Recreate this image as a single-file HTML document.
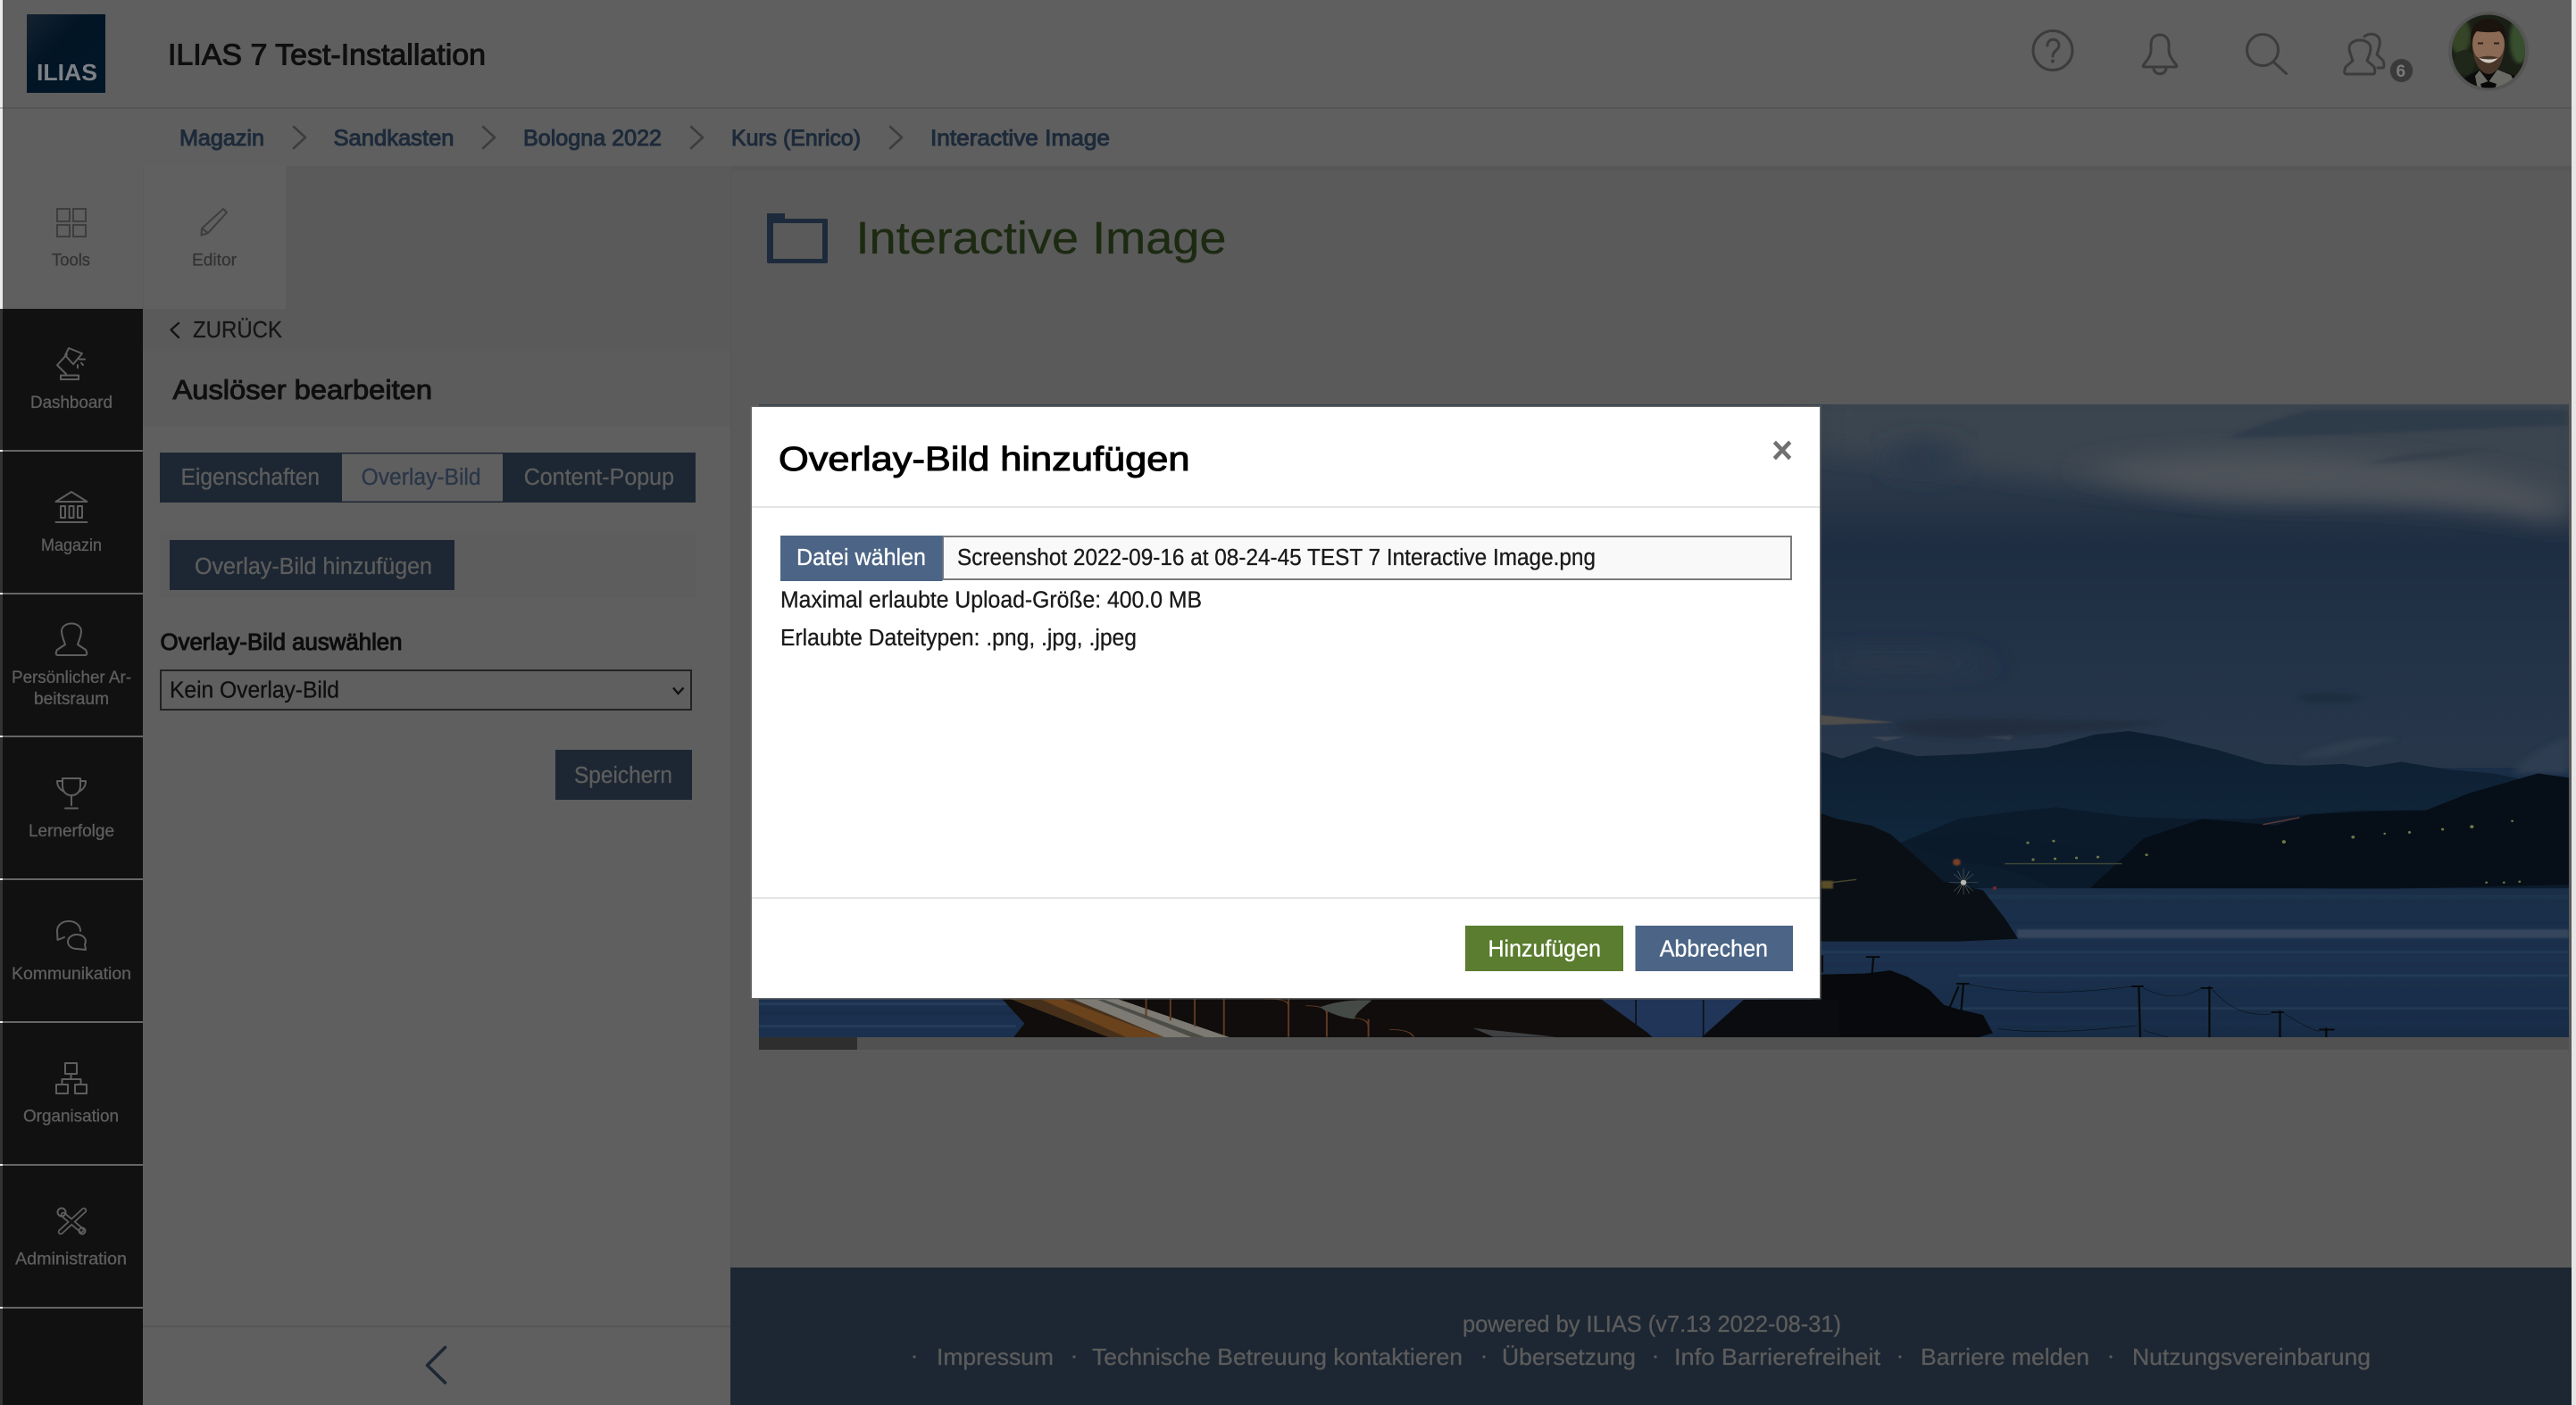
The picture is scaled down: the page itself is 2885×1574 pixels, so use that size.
<!DOCTYPE html>
<html lang="de"><head><meta charset="utf-8"><title>Interactive Image</title>
<style>
html,body{margin:0;padding:0;background:#5a5a5a;width:2885px;height:1574px;overflow:hidden}
svg{display:block}
text{font-family:"Liberation Sans",Arial,sans-serif;white-space:pre;fill:currentColor;stroke:currentColor;stroke-width:.3px}
text.s{stroke-width:1px}
text.p{stroke-width:0}
.i{fill:none;stroke:#3c3c3c;stroke-width:3;stroke-linecap:round;stroke-linejoin:round}
.n{fill:none;stroke:#5e5e5e;stroke-width:2;stroke-linejoin:round;stroke-linecap:round}
.tl{fill:none;stroke:#3e3e3e;stroke-width:2}
</style></head><body>
<svg xmlns="http://www.w3.org/2000/svg" width="2885" height="1574" viewBox="0 0 2885 1574">
<defs>
<linearGradient id="lg" x1="0" y1="0" x2="1" y2="1"><stop offset="0" stop-color="#16222f"/><stop offset=".4" stop-color="#011525"/><stop offset="1" stop-color="#011627"/></linearGradient>
<linearGradient id="sky" x1="0" y1="0" x2="0" y2="1"><stop offset="0" stop-color="#36404c"/><stop offset=".2" stop-color="#2c3949"/><stop offset=".38" stop-color="#1e2d42"/><stop offset=".65" stop-color="#223247"/><stop offset="1" stop-color="#29374b"/></linearGradient>
<linearGradient id="sea" x1="0" y1="0" x2="0" y2="1"><stop offset="0" stop-color="#1a2e47"/><stop offset=".5" stop-color="#1b314d"/><stop offset="1" stop-color="#172b45"/></linearGradient>
<linearGradient id="far" x1="0" y1="0" x2="0" y2="1"><stop offset="0" stop-color="#0e1e30"/><stop offset="1" stop-color="#112a40"/></linearGradient>
<filter id="b12" x="-30%" y="-100%" width="160%" height="300%"><feGaussianBlur stdDeviation="40 26"/></filter>
<filter id="b4" x="-20%" y="-60%" width="140%" height="220%"><feGaussianBlur stdDeviation="9 5"/></filter>
<filter id="b1" x="-5%" y="-100%" width="110%" height="300%"><feGaussianBlur stdDeviation="2 1.5"/></filter>
<clipPath id="imgclip"><rect x="850" y="453" width="2027" height="709"/></clipPath>
<clipPath id="av"><ellipse cx="2787" cy="57.5" rx="41" ry="41"/></clipPath>
</defs>

<!-- base -->
<rect width="2885" height="1574" fill="#5a5a5a"/>
<rect x="2880" y="0" width="5" height="1574" fill="#e6e6e6"/>

<!-- header -->
<rect x="3" y="0" width="2877" height="186" fill="#5f5f5f"/>
<rect x="0" y="0" width="3" height="346" fill="#ececec"/>
<rect x="3" y="120" width="2877" height="2" fill="#565656"/>
<rect x="0" y="120" width="3" height="2" fill="#bbb"/>
<rect x="3" y="186" width="2877" height="5" fill="#575757"/>
<rect x="30" y="16" width="88" height="88" fill="url(#lg)"/>
<text class="p" x="41" y="90" font-size="26" font-weight="700" color="#7d8186" textLength="68" lengthAdjust="spacingAndGlyphs">ILIAS</text>
<text class="s" x="188" y="72.5" font-size="33" color="#0f0f0f" textLength="356" lengthAdjust="spacingAndGlyphs">ILIAS 7 Test-Installation</text>

<g color="#1d2a3a" font-size="25">
<text class="s" x="201" y="163" textLength="95" lengthAdjust="spacingAndGlyphs">Magazin</text>
<text class="s" x="373.5" y="163" textLength="135" lengthAdjust="spacingAndGlyphs">Sandkasten</text>
<text class="s" x="586" y="163" textLength="155" lengthAdjust="spacingAndGlyphs">Bologna 2022</text>
<text class="s" x="819" y="163" textLength="145" lengthAdjust="spacingAndGlyphs">Kurs (Enrico)</text>
<text class="s" x="1042" y="163" textLength="201" lengthAdjust="spacingAndGlyphs">Interactive Image</text>
</g>
<g fill="none" stroke="#3d3d3d" stroke-width="2.6" stroke-linecap="round" stroke-linejoin="round">
<path d="M329 142L342 154L329 166"/><path d="M541 142L554 154L541 166"/><path d="M774 142L787 154L774 166"/><path d="M997 142L1010 154L997 166"/>
</g>

<!-- header icons -->
<ellipse class="i" cx="2299" cy="56.5" rx="22" ry="22"/>
<path class="i" d="M2293 51C2293 42 2306 42 2306 51C2306 56 2299 57 2299 63"/><circle cx="2299" cy="68.5" r="2" fill="#3c3c3c"/>
<path class="i" d="M2400.5 73C2404 68 2409 63 2409 56L2409 50C2409 43 2413 39 2419 39C2425 39 2429 43 2429 50L2429 56C2429 63 2434 68 2437.5 73Q2438.5 75 2436 75L2402 75Q2399.5 75 2400.5 73Z"/>
<path class="i" d="M2412 76C2412 85 2426 85 2426 76"/>
<circle class="i" cx="2534" cy="56" r="17.5"/><path class="i" d="M2546 69L2560.5 82.5"/>
<path class="i" d="M2635 68C2633 62 2631 58 2631 54C2631 48 2637 45 2643 45C2649 45 2655 48 2655 54C2655 59 2653 63 2651 68L2659 75Q2661 83 2658 83L2628 83Q2624 83 2627 75Z"/>
<path class="i" d="M2648 41C2652 37 2660 37 2664 42C2667 47 2664 55 2662 61L2669 68Q2671 74 2669 76L2663 76"/>
<ellipse cx="2689.5" cy="79" rx="12.7" ry="13" fill="#3a3a3a"/>
<text class="p" x="2683.5" y="86" font-size="19" font-weight="700" color="#7a7a7a">6</text>
<ellipse cx="2787" cy="57.5" rx="45" ry="44.5" fill="#555"/>
<g clip-path="url(#av)">
<rect x="2742" y="13" width="90" height="90" fill="#1a1f16"/>
<ellipse cx="2755" cy="40" rx="12" ry="20" fill="#344428" filter="url(#b1)"/>
<ellipse cx="2822" cy="45" rx="11" ry="26" fill="#38502f" filter="url(#b1)"/>
<ellipse cx="2760" cy="70" rx="12" ry="14" fill="#1f271b"/>
<path d="M2745 100L2762 86L2777 78L2797 78L2815 84L2832 100Z" fill="#0c0c0c"/>
<path d="M2777 79L2787 92L2797 78L2812 84L2818 95L2800 101L2775 101L2772 85Z" fill="#6a6a64"/>
<path d="M2778 94L2787 91L2796 94L2794 100L2780 100Z" fill="#060606"/>
<ellipse cx="2787" cy="50" rx="18" ry="27" fill="#8a6a54"/>
<path d="M2769 50C2769 66 2776 82 2787 83C2798 83 2805 66 2805 50C2804 58 2802 63 2798 65C2794 62 2780 62 2776 65C2772 63 2770 58 2769 50Z" fill="#4a3629"/>
<path d="M2768 48C2764 30 2776 21 2787 21C2800 21 2809 30 2806 48C2804 41 2802 37 2799 35C2790 37 2780 36 2774 35C2771 38 2770 41 2768 48Z" fill="#1b130e"/>
<path d="M2776 65Q2787 76 2798 65Q2787 68 2776 65Z" fill="#cfcac2"/>
<rect x="2775" y="47.5" width="6" height="2" fill="#2c1f16"/><rect x="2793" y="47.5" width="6" height="2" fill="#2c1f16"/>
</g>

<!-- tool column -->
<rect x="3" y="186" width="157" height="160" fill="#5f5f5f"/>
<rect x="160" y="186" width="160" height="160" fill="#606060"/>
<rect x="160" y="186" width="1" height="160" fill="#5a5a5a"/>
<g class="tl">
<rect class="tl" x="64" y="234" width="14" height="14"/><rect class="tl" x="82" y="234" width="14" height="14"/>
<rect class="tl" x="64" y="252" width="14" height="13"/><rect class="tl" x="82" y="252" width="14" height="13"/>
</g>
<path class="tl" stroke-linejoin="round" d="M225.5 263.5L226 256L250 234L254 238L233 261ZM226 256L233 261"/>
<text x="58" y="297.5" font-size="19" color="#333" textLength="43" lengthAdjust="spacingAndGlyphs">Tools</text>
<text x="215" y="297.5" font-size="19" color="#333" textLength="50" lengthAdjust="spacingAndGlyphs">Editor</text>

<!-- nav -->
<rect x="0" y="346" width="3" height="1228" fill="#333"/>
<rect x="3" y="346" width="157" height="1228" fill="#111"/>
<g fill="#666"><rect x="3" y="504" width="157" height="2"/><rect x="3" y="664" width="157" height="2"/><rect x="3" y="824" width="157" height="2"/><rect x="3" y="984" width="157" height="2"/><rect x="3" y="1144" width="157" height="2"/><rect x="3" y="1304" width="157" height="2"/><rect x="3" y="1464" width="157" height="2"/></g>
<g fill="#ececec"><rect x="0" y="504" width="3" height="2"/><rect x="0" y="664" width="3" height="2"/><rect x="0" y="824" width="3" height="2"/><rect x="0" y="984" width="3" height="2"/><rect x="0" y="1144" width="3" height="2"/><rect x="0" y="1304" width="3" height="2"/><rect x="0" y="1464" width="3" height="2"/></g>
<g font-size="19" color="#5e5e5e">
<text x="34" y="457" textLength="92" lengthAdjust="spacingAndGlyphs">Dashboard</text>
<text x="46" y="617" textLength="68" lengthAdjust="spacingAndGlyphs">Magazin</text>
<text x="13" y="765" textLength="134" lengthAdjust="spacingAndGlyphs">Persönlicher Ar-</text>
<text x="38" y="789" textLength="84" lengthAdjust="spacingAndGlyphs">beitsraum</text>
<text x="32" y="937" textLength="96" lengthAdjust="spacingAndGlyphs">Lernerfolge</text>
<text x="13" y="1097" textLength="134" lengthAdjust="spacingAndGlyphs">Kommunikation</text>
<text x="26" y="1256.5" textLength="107" lengthAdjust="spacingAndGlyphs">Organisation</text>
<text x="17" y="1416.5" textLength="125" lengthAdjust="spacingAndGlyphs">Administration</text>
</g>
<!-- nav icons -->
<path class="n" d="M68 420.5H88V425H68ZM75 397L64 409L74 419M82 408L73 398L77 390L92 396ZM89 402.5H95M87 409V412M91 406.5L93 409"/>
<path class="n" d="M62.5 562L80 551L97.5 562ZM68 567H73V580H68ZM77.5 567H82.5V580H77.5ZM87 567H92V580H87ZM62.5 585H97.5"/>
<path class="n" d="M73 722C71 716 69 712 69 707C69 702 74 698.5 80 698.5C86 698.5 91 702 91 707C91 712 89 716 87 722L96 728Q99 734 95 734L65 734Q61 734 64 728Z"/>
<path class="n" d="M70 872H90V880C90 888 85 891 80 891C75 891 70 888 70 880ZM70 875H64C64 882 68 885 72 887M90 875H96C96 882 92 885 88 887M80 891V902M73 905.5H87"/>
<path class="n" d="M90 1043C90 1036 84 1032 77 1032C70 1032 64 1036 64 1043L64.5 1053L72 1050M86 1047C80 1047 76 1051 76 1055C76 1060 81 1063 86 1063L96 1064L95 1058C98 1052 93 1047 86 1047Z"/>
<path class="n" d="M73 1191H86V1203H73ZM79.5 1203V1209M69.5 1215V1209H90.5V1215M63 1215H76V1225H63ZM84 1215H97V1225H84Z"/>
<g fill="none" stroke-linecap="round"><path d="M71 1361L91 1378M94 1356L68 1380" stroke="#5e5e5e" stroke-width="6.5"/><path d="M71 1361L91 1378M94 1356L68 1380" stroke="#111" stroke-width="3"/><circle cx="69" cy="1358" r="4.5" stroke="#5e5e5e" stroke-width="2"/><circle cx="92" cy="1379" r="3.5" stroke="#5e5e5e" stroke-width="2"/></g>

<!-- tool panel -->
<rect x="160" y="346" width="658" height="1228" fill="#5f5f5f"/>
<rect x="160" y="346" width="658" height="45" fill="#5a5a5a"/>
<rect x="160" y="391" width="658" height="5" fill="#5c5c5c"/>
<rect x="160" y="396" width="658" height="81" fill="#5c5c5c"/>
<rect x="320" y="186" width="498" height="160" fill="#5a5a5a"/>
<path d="M200 362L191.5 369.5L200 378" fill="none" stroke="#141414" stroke-width="2.4" stroke-linecap="round" stroke-linejoin="round"/>
<text x="216" y="378" font-size="25.5" color="#161616" textLength="100" lengthAdjust="spacingAndGlyphs">ZURÜCK</text>
<text class="s" x="193.5" y="447" font-size="31" color="#0f0f0f" textLength="290.5" lengthAdjust="spacingAndGlyphs">Auslöser bearbeiten</text>

<rect x="179" y="507" width="600" height="56" fill="#1d2733"/>
<rect x="383" y="508.5" width="180" height="53" fill="#5f5f5f"/>
<g font-size="25.5">
<text x="202.5" y="543" color="#5d5d5d" textLength="155.5" lengthAdjust="spacingAndGlyphs">Eigenschaften</text>
<text x="404.6" y="543" color="#2a3648" textLength="134" lengthAdjust="spacingAndGlyphs">Overlay-Bild</text>
<text x="586.7" y="543" color="#5d5d5d" textLength="168.3" lengthAdjust="spacingAndGlyphs">Content-Popup</text>
</g>
<rect x="179" y="597" width="600" height="73" fill="#5d5d5d"/>
<rect x="190" y="605" width="319" height="56" fill="#1d2733"/>
<text x="218" y="643" font-size="25.5" color="#5d5d5d" textLength="266" lengthAdjust="spacingAndGlyphs">Overlay-Bild hinzufügen</text>
<text class="s" x="179.5" y="728" font-size="25.5" color="#0c0c0c" textLength="271" lengthAdjust="spacingAndGlyphs">Overlay-Bild auswählen</text>
<rect x="180" y="751" width="594" height="44" fill="none" stroke="#222" stroke-width="2"/>
<text x="190" y="781.5" font-size="25.5" color="#0f0f0f" textLength="190" lengthAdjust="spacingAndGlyphs">Kein Overlay-Bild</text>
<path d="M754 770.5L759.5 777L765.5 770.5" fill="none" stroke="#111" stroke-width="2.4"/>
<rect x="622" y="840" width="153" height="56" fill="#1d2733"/>
<text x="643" y="877" font-size="25.5" color="#5d5d5d" textLength="110" lengthAdjust="spacingAndGlyphs">Speichern</text>

<rect x="160" y="1485" width="658" height="2" fill="#555"/>
<path d="M498.5 1509.5L478.5 1529.5L498.5 1549" fill="none" stroke="#1d2733" stroke-width="3.6" stroke-linecap="round" stroke-linejoin="round"/>
<rect x="818" y="186" width="2" height="1234" fill="#585858"/>

<!-- main title -->
<path d="M859 239H879V245H925Q927 245 927 247V293Q927 295 925 295H861Q859 295 859 293Z" fill="#1d2a3c"/>
<rect x="866" y="250" width="55" height="40" fill="#5a5a5a"/>
<text x="958.5" y="284" font-size="51" color="#1d2a12" textLength="415" lengthAdjust="spacingAndGlyphs">Interactive Image</text>

<!-- image -->
<rect x="850" y="1162" width="2027" height="14" fill="#515151"/>
<rect x="850" y="1162" width="110" height="14" fill="#2e2e2e"/>
<g clip-path="url(#imgclip)">
<rect x="850" y="453" width="2027" height="420" fill="url(#sky)"/>
<rect x="850" y="860" width="2027" height="302" fill="url(#sea)"/>
<g transform="translate(2030 440) scale(.5453 .4847)">
 <!-- clouds -->
 <path d="M0 0H1600V250C1400 220 1200 240 900 240C700 240 500 200 300 170C200 160 100 140 0 130Z" fill="#3a444f" filter="url(#b12)"/>
 <path d="M550 175C750 130 1000 130 1250 165C1380 180 1480 205 1553 240V310C1450 280 1300 255 1050 250C800 250 700 225 550 175Z" fill="#4d525a" filter="url(#b12)"/>
 <path d="M1020 40H1553V75C1400 80 1200 95 850 105C900 80 950 60 1020 40Z" fill="#2f3b49" filter="url(#b4)"/>
 <ellipse cx="230" cy="150" rx="70" ry="45" fill="#29384a" filter="url(#b12)"/>
 <path d="M1130 165C1250 130 1350 125 1400 130L1300 150Z" fill="#353f4c" filter="url(#b4)"/>
 <ellipse cx="1060" cy="705" rx="65" ry="13" fill="#1e2d41" filter="url(#b4)"/>
 <path d="M17 600H300L360 640L200 650L17 640Z" fill="#2b394b" filter="url(#b12)"/>
 <path d="M17 745L170 762L17 768Z" fill="#504d49" filter="url(#b1)"/>
 <path d="M120 795H190L150 805ZM345 795L415 788L405 802Z" fill="#3c4755" filter="url(#b1)"/>
 <path d="M180 760C300 740 500 760 720 760C600 790 400 790 330 800C200 800 150 780 180 760Z" fill="#202e41" filter="url(#b4)"/>
 <path d="M1000 840C1080 800 1150 790 1200 800C1100 830 1060 850 1000 840Z" fill="#2e3c4f" filter="url(#b4)"/>
 <path d="M1440 880C1470 830 1520 810 1553 795V880Z" fill="#2d3c51" filter="url(#b4)"/>
 <!-- mountains -->
 <path d="M17 830L60 845L130 818L215 840L330 835L480 820L580 790L650 782L720 795L830 825L930 858L1010 862L1090 858L1140 865L1210 853L1300 870L1400 880L1450 892L1553 900V1150H17Z" fill="url(#far)"/>
 <path d="M180 1040L300 985L400 970L500 958L650 980L780 985L900 985L1000 975L1120 965L1260 965L1350 925L1490 880L1553 890V1145H180Z" fill="#0b1b2c"/>
 <path d="M190 1040C260 1015 340 1010 420 1030L600 1060V1145H380L300 1090Z" fill="#0a1a2a"/>
 <path d="M570 1145L680 1030L800 985L950 1000L1020 975L1130 968L1260 965L1350 925L1490 880L1553 890V1137L1200 1146Z" fill="#060e18"/>
 <path d="M280 1090C340 1080 420 1100 490 1145H340Z" fill="#0c1d2e"/>
 <rect x="395" y="1087" width="240" height="3" fill="#3d4636"/>
 <path d="M925 998L1000 982" stroke="#5a3a36" stroke-width="3"/>
 <rect x="360" y="1152" width="170" height="5" fill="#25344a"/>
 <!-- sea -->
 <rect x="17" y="1146" width="1536" height="344" fill="url(#sea)"/>
 <rect x="360" y="1160" width="1193" height="10" fill="#1f354e" filter="url(#b1)"/>
 <rect x="400" y="1222" width="1153" height="8" fill="#192d48" filter="url(#b1)"/>
 <rect x="420" y="1240" width="1133" height="20" fill="#34445c" filter="url(#b1)"/>
 <rect x="17" y="1270" width="1536" height="8" fill="#1a2f4b" filter="url(#b1)"/>
 <rect x="17" y="1290" width="1536" height="5" fill="#233b57" filter="url(#b1)"/>
 <rect x="17" y="1315" width="1536" height="10" fill="#1a2f4c" filter="url(#b1)"/>
 <rect x="300" y="1345" width="1253" height="5" fill="#243c58" filter="url(#b1)"/>
 <rect x="300" y="1380" width="1253" height="8" fill="#192e4c" filter="url(#b1)"/>
 <rect x="300" y="1420" width="1253" height="5" fill="#233b57" filter="url(#b1)"/>
 <rect x="300" y="1455" width="1253" height="6" fill="#192e4c" filter="url(#b1)"/>
 <!-- headland -->
 <path d="M0 965L50 985L120 1000L160 1020L215 1075L270 1130L350 1150L395 1215L422 1262L300 1268L0 1268Z" fill="#0a0f15"/>
 <path d="M17 1135L90 1125" stroke="#4a4530" stroke-width="3"/>
 <rect x="18" y="1128" width="24" height="18" fill="#5a4e28" filter="url(#b1)"/>
 <!-- foreground -->
 <path d="M0 1345L110 1342L160 1335L195 1350L240 1380L270 1415L300 1425L350 1438L370 1480L340 1490H0Z" fill="#07090c"/>
 <g stroke="#07090c" fill="none">
  <path d="M670 1370L673 1490M655 1372H680M815 1372V1490M797 1376H822M960 1428V1490M942 1432H968M1055 1468V1490M1040 1472H1072" stroke-width="4"/>
  <path d="M310 1365L305 1430M295 1366H322M300 1372L280 1425M125 1305L122 1345L110 1345M110 1304H138M20 1300V1340" stroke-width="4"/>
  <path d="M322 1368C400 1385 500 1395 655 1372M680 1376C720 1400 760 1400 797 1378M822 1380C860 1430 900 1440 942 1436M968 1434C990 1450 1020 1470 1040 1476M380 1470C480 1485 600 1470 665 1463M680 1474L730 1490" stroke-width="1"/>
 </g>
 <!-- lights -->
 <circle cx="296" cy="1085" r="8" fill="#7a4028" filter="url(#b1)"/>
 <circle cx="374" cy="1145" r="4" fill="#7a2626"/>
 <g stroke="#6e6e68" stroke-width="1"><path d="M280 1132H340M310 1100V1160M290 1112L330 1152M330 1112L290 1152M298 1105L322 1158M322 1105L298 1158"/></g>
 <circle cx="310" cy="1132" r="6" fill="#b8b8b0"/>
 <g fill="#6f7748"><circle cx="442" cy="1040" r="3"/><circle cx="495" cy="1036" r="3"/><circle cx="453" cy="1079" r="3"/><circle cx="498" cy="1077" r="3"/><circle cx="542" cy="1075" r="3"/><circle cx="586" cy="1073" r="3"/><circle cx="686" cy="1068" r="3"/><circle cx="968" cy="1038" r="4"/><circle cx="1110" cy="1027" r="3.5"/><circle cx="1175" cy="1019" r="2.5"/><circle cx="1226" cy="1016" r="3"/><circle cx="1294" cy="1009" r="3"/><circle cx="1354" cy="1003" r="4"/><circle cx="1437" cy="990" r="2.5"/><circle cx="1384" cy="1132" r="2.5"/><circle cx="1420" cy="1132" r="2.5"/><circle cx="1452" cy="1130" r="2.5"/></g>
</g>
<!-- below modal strip -->
<g transform="translate(840 960) scale(.7782 .3333)">
 <rect x="13" y="470" width="1290" height="140" fill="#1b304e"/>
 <rect x="13" y="490" width="370" height="8" fill="#253c5a"/><rect x="13" y="520" width="370" height="10" fill="#182c48"/><rect x="13" y="565" width="370" height="8" fill="#253c5a"/>
 <path d="M360 470H1240L1300 610H378L395 560Z" fill="#100d0c"/>
 <path d="M372 475L460 475L680 610L520 610Z" fill="#46301a"/>
 <path d="M420 480L450 478L600 610L545 610Z" fill="#6a421c"/>
 <path d="M465 478L530 478L695 610L600 610Z" fill="#7c7a72"/>
 <path d="M500 480L510 480L660 610L640 610Z" fill="#4d4d48"/>
 <g stroke="#5f3a22" stroke-width="2.5" fill="none"><path d="M570 475V540M605 475V550M640 475V570M682 475V600M775 478V605M830 510V605M890 545V605"/><path d="M740 478Q775 475 775 500M800 500Q830 500 830 525M860 540Q890 540 890 570M920 580Q950 580 955 605"/></g>
 <path d="M820 505C850 480 880 480 895 482C880 510 870 530 870 545C850 540 830 520 820 505Z" fill="#464a46"/>
 <path d="M1040 575L1160 605H1070Z" fill="#3e4042"/>
 <path d="M1220 470H1470L1375 605H1300Z" fill="#213558"/>
 <path d="M1275 480V605M1372 480V605" stroke="#0c0e12" stroke-width="2"/>
 <path d="M1370 605L1430 480H1568V610H1370Z" fill="#0a0c10"/>
</g>
</g>

<!-- footer -->
<rect x="818" y="1420" width="2062" height="154" fill="#1d2733"/>
<g font-size="26" color="#5c5c5c">
<text x="1638" y="1492" textLength="424" lengthAdjust="spacingAndGlyphs">powered by ILIAS (v7.13 2022-08-31)</text>
<text x="1049" y="1529" textLength="131" lengthAdjust="spacingAndGlyphs">Impressum</text>
<text x="1223" y="1529" textLength="415" lengthAdjust="spacingAndGlyphs">Technische Betreuung kontaktieren</text>
<text x="1682" y="1529" textLength="150" lengthAdjust="spacingAndGlyphs">Übersetzung</text>
<text x="1875" y="1529" textLength="231" lengthAdjust="spacingAndGlyphs">Info Barrierefreiheit</text>
<text x="2151" y="1529" textLength="189" lengthAdjust="spacingAndGlyphs">Barriere melden</text>
<text x="2388" y="1529" textLength="267" lengthAdjust="spacingAndGlyphs">Nutzungsvereinbarung</text>
</g>
<g fill="#5c5c5c"><circle cx="1024" cy="1520" r="1.6"/><circle cx="1203" cy="1520" r="1.6"/><circle cx="1662" cy="1520" r="1.6"/><circle cx="1854" cy="1520" r="1.6"/><circle cx="2128" cy="1520" r="1.6"/><circle cx="2364" cy="1520" r="1.6"/></g>

<!-- modal -->
<rect x="840.5" y="454.5" width="1199" height="665" fill="#666"/>
<rect x="842" y="456" width="1196" height="662" fill="#fff"/>
<rect x="842" y="567" width="1196" height="2" fill="#e5e5e5"/>
<rect x="842" y="1005" width="1196" height="2" fill="#e5e5e5"/>
<text class="s" x="872" y="527" font-size="38" color="#000" textLength="460.5" lengthAdjust="spacingAndGlyphs">Overlay-Bild hinzufügen</text>
<text class="p" x="1984" y="519" font-size="44" font-weight="700" color="#707070" textLength="24" lengthAdjust="spacingAndGlyphs">×</text>
<rect x="1056" y="601" width="950" height="48" fill="#f9f9f9" stroke="#7b7b7b" stroke-width="2"/>
<rect x="874" y="600" width="181.5" height="51" fill="#4c6586"/>
<text x="892" y="633" font-size="25.5" color="#fff" textLength="145" lengthAdjust="spacingAndGlyphs">Datei wählen</text>
<text x="1072" y="633" font-size="25.5" color="#1a1a1a" textLength="715" lengthAdjust="spacingAndGlyphs">Screenshot 2022-09-16 at 08-24-45 TEST 7 Interactive Image.png</text>
<text x="874" y="680.5" font-size="25.5" color="#1a1a1a" textLength="472" lengthAdjust="spacingAndGlyphs">Maximal erlaubte Upload-Größe: 400.0 MB</text>
<text x="874" y="723" font-size="25.5" color="#1a1a1a" textLength="399" lengthAdjust="spacingAndGlyphs">Erlaubte Dateitypen: .png, .jpg, .jpeg</text>
<rect x="1641" y="1037" width="177" height="51" fill="#5a7d2f"/>
<text x="1666.5" y="1071.5" font-size="25.5" color="#fff" textLength="126.5" lengthAdjust="spacingAndGlyphs">Hinzufügen</text>
<rect x="1831.5" y="1037" width="176.5" height="51" fill="#4c6586"/>
<text x="1858.7" y="1071.5" font-size="25.5" color="#fff" textLength="121.3" lengthAdjust="spacingAndGlyphs">Abbrechen</text>
</svg>
</body></html>
